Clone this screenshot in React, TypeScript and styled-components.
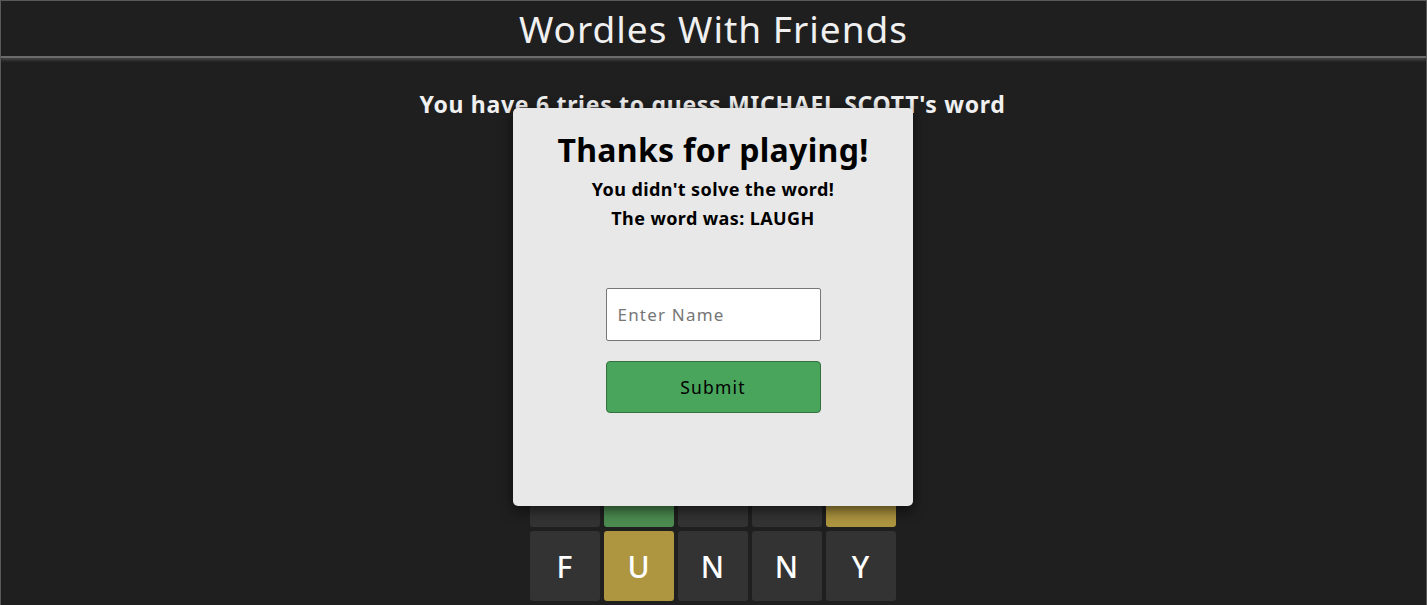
import React from "react";
import styled, { createGlobalStyle } from "styled-components";

const Global = createGlobalStyle`
  html, body { margin: 0; padding: 0; background: #1f1f1f; }
  body { font-family: "Noto Sans", "Open Sans", sans-serif; overflow: hidden; }
  * { box-sizing: border-box; }
`;

const Frame = styled.div`
  position: relative;
  min-height: 605px;
  background: #1f1f1f;
  border: 1px solid #5a5a5a;
  border-bottom: none;
`;

const Header = styled.header`
  height: 57px;
  display: flex;
  align-items: center;
  justify-content: center;
  border-bottom: 2px solid #6a6a6a;
  box-shadow: 0 2px 3px rgba(90, 90, 90, 0.7);
`;

const Title = styled.h1`
  margin: 0;
  font-size: 37px;
  font-weight: 400;
  color: #f0f0f0;
  letter-spacing: 1px;
`;

const Main = styled.main`
  display: flex;
  flex-direction: column;
  align-items: center;
  padding-right: 2px;
`;

const Subtitle = styled.h2`
  margin: 32px 0 0;
  font-size: 23px;
  font-weight: 700;
  color: #f0f0f0;
  line-height: 28px;
  letter-spacing: 0.7px;
`;

const Grid = styled.div`
  margin-top: 43px;
  display: grid;
  grid-template-columns: repeat(5, 70px);
  grid-auto-rows: 70px;
  gap: 4px;
`;

const Tile = styled.div<{ $state: "empty" | "absent" | "present" | "correct" }>`
  border-radius: 3px;
  display: flex;
  align-items: center;
  justify-content: center;
  color: #fff;
  font-size: 30px;
  font-weight: 500;
  background: ${(p) =>
    p.$state === "correct" ? "#4c8c50" : p.$state === "present" ? "#ae953f" : "#333333"};
`;

const Modal = styled.div`
  position: absolute;
  left: 512px;
  top: 107px;
  width: 400px;
  height: 398px;
  background: #e8e8e8;
  border-radius: 5px;
  box-shadow: 0 4px 14px rgba(0, 0, 0, 0.6);
  display: flex;
  flex-direction: column;
  align-items: center;
  padding-top: 22px;
  color: #000;
`;

const ModalTitle = styled.h2`
  margin: 0;
  font-size: 32px;
  font-weight: 700;
  line-height: 40px;
  letter-spacing: 0.3px;
`;

const ModalLine = styled.p`
  margin: 0;
  font-size: 18px;
  font-weight: 700;
  line-height: 29px;
  letter-spacing: 0.4px;
`;

const Lines = styled.div`
  margin-top: 5px;
  display: flex;
  flex-direction: column;
  align-items: center;
`;

const Form = styled.form`
  margin-top: 55px;
  display: flex;
  flex-direction: column;
  gap: 20px;
  width: 215px;
`;

const NameInput = styled.input`
  height: 53px;
  border: 1px solid #777;
  border-radius: 2px;
  background: #fff;
  padding: 0 11px;
  font-family: inherit;
  font-size: 17px;
  letter-spacing: 1.2px;
  color: #222;
  &::placeholder { color: #767676; }
`;

const SubmitButton = styled.button`
  height: 52px;
  border: 1px solid #35703f;
  border-radius: 4px;
  background: #49a55c;
  font-family: inherit;
  font-size: 17.5px;
  letter-spacing: 1.2px;
  color: #000;
`;

type S = "empty" | "absent" | "present" | "correct";
const rows: { l: string; s: S }[][] = [
  ...Array.from({ length: 4 }, () => Array.from({ length: 5 }, () => ({ l: "", s: "empty" as S }))),
  [
    { l: "", s: "absent" },
    { l: "", s: "correct" },
    { l: "", s: "absent" },
    { l: "", s: "absent" },
    { l: "", s: "present" },
  ],
  [
    { l: "F", s: "absent" },
    { l: "U", s: "present" },
    { l: "N", s: "absent" },
    { l: "N", s: "absent" },
    { l: "Y", s: "absent" },
  ],
];

export default function App() {
  return (
    <>
      <Global />
      <Frame>
        <Header>
          <Title>Wordles With Friends</Title>
        </Header>
        <Main>
          <Subtitle>You have 6 tries to guess MICHAEL SCOTT's word</Subtitle>
          <Grid>
            {rows.flat().map((t, i) => (
              <Tile key={i} $state={t.s}>
                {t.l}
              </Tile>
            ))}
          </Grid>
        </Main>
        <Modal>
          <ModalTitle>Thanks for playing!</ModalTitle>
          <Lines>
            <ModalLine>You didn't solve the word!</ModalLine>
            <ModalLine>The word was: LAUGH</ModalLine>
          </Lines>
          <Form onSubmit={(e) => e.preventDefault()}>
            <NameInput placeholder="Enter Name" />
            <SubmitButton type="submit">Submit</SubmitButton>
          </Form>
        </Modal>
      </Frame>
    </>
  );
}
